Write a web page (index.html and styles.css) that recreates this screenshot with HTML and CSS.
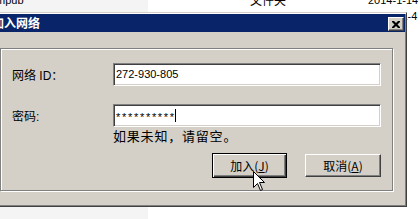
FILE: index.html
```html
<!DOCTYPE html>
<html>
<head>
<meta charset="utf-8">
<link rel="stylesheet" href="styles.css">
</head>
<body>
<div class="list">
  <div class="row"><span class="c1"><span class="name">mpub</span></span><span class="c2">文件夹</span><span class="c3">2014-1-14</span></div>
  <div class="row"><span class="c1"></span><span class="c2"></span><span class="c3">2014-11-4</span></div>
</div>
<div class="dialog">
  <div class="titlebar">
    <span class="title">加入网络</span>
    <span class="close"><svg width="8" height="7" viewBox="0 0 8 7"><path d="M0 0h2l2 2 2-2h2v1l-2.5 2.5L8 6v1H6L4 5 2 7H0V6l2.5-2.5L0 1z" fill="#000"/></svg></span>
  </div>
  <div class="group">
    <div class="form">
      <span class="label">网络 ID：</span>
      <div class="edit">272-930-805</div>
      <span class="label second">密码:</span>
      <div class="edit second pw"><span class="stars">**********</span><span class="caret"></span></div>
      <span></span>
      <div class="hint">如果未知，请留空。</div>
    </div>
    <div class="buttons">
      <span class="btn default">加入(<u>J</u>)</span>
      <span class="btn">取消(<u>A</u>)</span>
    </div>
  </div>
</div>
<svg class="cursor" width="13" height="21" viewBox="0 0 13 21"><path d="M0.5 0.5V16.5L4.5 12.5L7.5 19.5L9.5 18.5L6.5 11.5H11.5Z" fill="#fff" stroke="#000" stroke-width="1"/></svg>
</body>
</html>
```
FILE: styles.css
```css
* { box-sizing: border-box; }
html, body { margin: 0; }
body {
  width: 420px;
  height: 219px;
  overflow: hidden;
  position: relative;
  background: linear-gradient(to right, #f4f4f4 148px, #ffffff 148px);
  font-family: "Liberation Sans", "Noto Sans CJK SC", sans-serif;
  color: #000;
}
.list { margin-top: -8px; font-size: 11px; }
.row { display: flex; height: 16px; line-height: 16px; white-space: nowrap; }
.c1 { width: 250px; flex: none; }
.name { margin-left: -4px; }
.c2 { width: 118px; flex: none; font-size: 12px; font-family: "Noto Sans CJK SC", sans-serif; }
.c3 { flex: none; }

.dialog {
  position: absolute;
  left: -12px;
  top: 12px;
  width: 419px;
  height: 195px;
  background: #d4d0c8;
  border: 1px solid;
  border-color: #d4d0c8 #404040 #404040 #d4d0c8;
  box-shadow: inset 1px 1px #ffffff, inset -1px -1px #808080;
  padding: 1px;
  display: flex;
  flex-direction: column;
}
.titlebar {
  height: 18px;
  flex: none;
  background: #0a246a;
  color: #fff;
  display: flex;
  align-items: flex-start;
  justify-content: space-between;
  padding: 0 1px 0 0;
  font: bold 12px/18px "Noto Sans CJK SC", sans-serif;
}
.title { margin-left: 2px; }
.close {
  width: 16px;
  height: 14px;
  margin-top: 3px;
  background: #d4d0c8;
  border: 1px solid;
  border-color: #ffffff #404040 #404040 #ffffff;
  box-shadow: inset -1px -1px #808080;
  display: flex;
  align-items: center;
  justify-content: center;
  padding-right: 1px;
}
.close svg { display: block; }
.group {
  margin: 16px 0 0 10px;
  width: 393px;
  height: 143px;
  border: 1px solid #808080;
  box-shadow: inset 1px 1px #ffffff, 1px 1px #ffffff;
  padding: 14px 11px 0 11px;
}
.form {
  display: grid;
  grid-template-columns: 101px 268px;
  font-size: 12px;
}
.label { align-self: center; font-family: "Liberation Sans", "Noto Sans CJK SC", sans-serif; }
.second { margin-top: 18px; }
.edit {
  height: 23px;
  background: #fff;
  border: 1px solid;
  border-color: #808080 #ffffff #ffffff #808080;
  box-shadow: inset 1px 1px #404040, inset -1px -1px #d4d0c8;
  padding-left: 2px;
  font: 11px/21px "Liberation Sans", sans-serif;
  display: flex;
  align-items: center;
}
.stars { font: 11px "Liberation Sans", sans-serif; letter-spacing: 1.7px; color: #000; margin-top: 2px; }
.caret { width: 1px; height: 13px; background: #000; margin-left: -1px; }
.hint { line-height: 14px; margin-top: 2px; font-size: 13px; letter-spacing: 0.8px; font-family: "Noto Sans CJK SC", sans-serif; }
.buttons {
  display: flex;
  justify-content: flex-end;
  align-items: center;
  gap: 18px;
  margin-top: 10px;
}
.btn {
  width: 76px;
  height: 23px;
  background: #d4d0c8;
  border: 1px solid;
  border-color: #ffffff #404040 #404040 #ffffff;
  box-shadow: inset -1px -1px #808080;
  display: flex;
  align-items: center;
  justify-content: center;
  font: 12px "Noto Sans CJK SC", sans-serif;
}
.btn u { text-decoration: underline; text-underline-offset: 1px; }
.btn.default {
  width: 75px;
  height: 25px;
  border: 1px solid #000;
  box-shadow: inset 1px 1px #ffffff, inset -1px -1px #404040, inset -2px -2px #808080;
}
.cursor { position: absolute; left: 253px; top: 171px; display: block; }
```
